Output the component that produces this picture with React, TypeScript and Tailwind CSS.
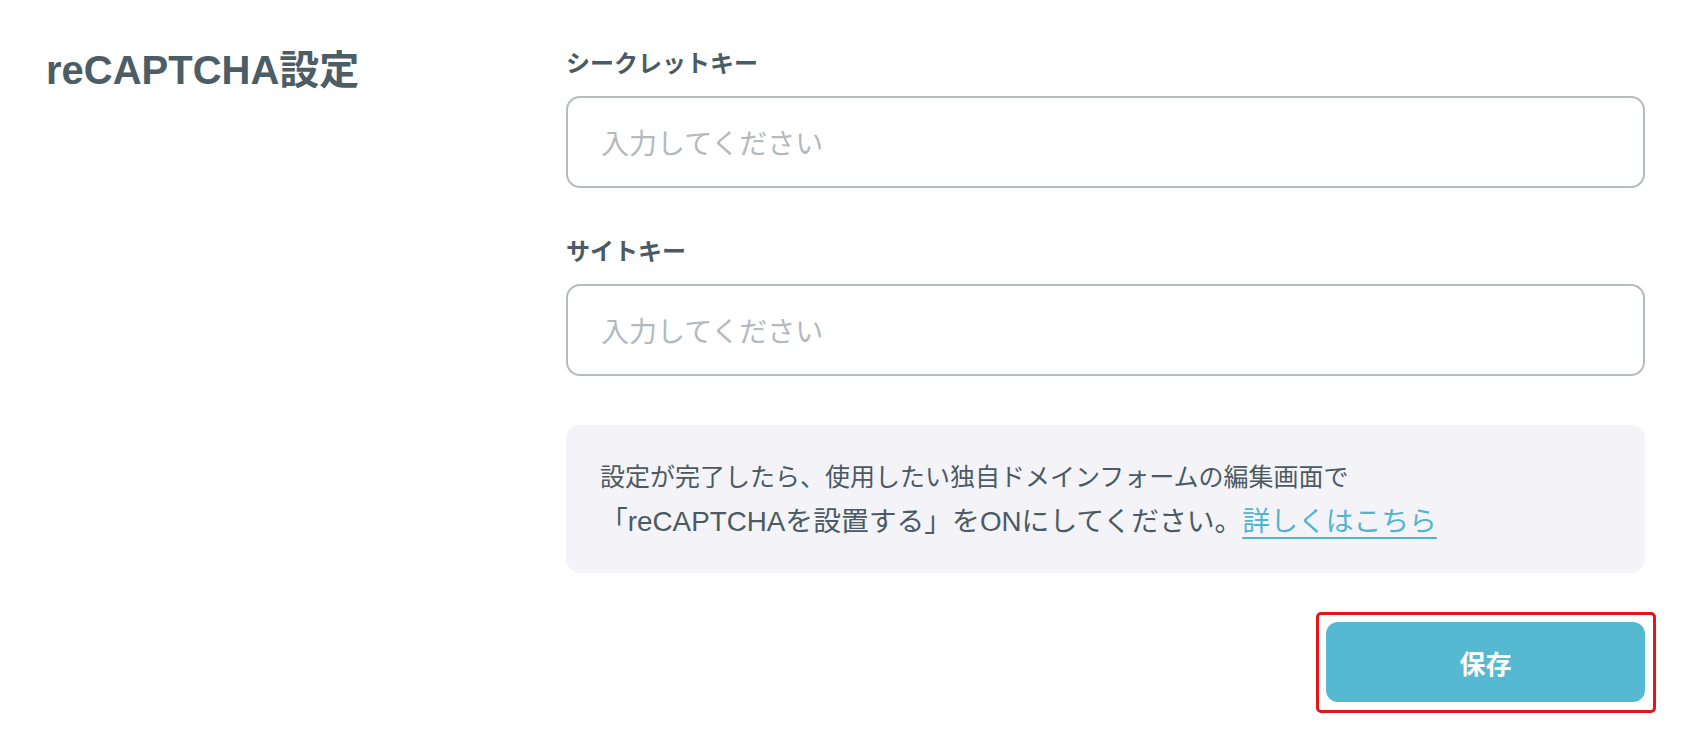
const jp = { fontFamily: '"Liberation Sans", "Noto Sans CJK JP", "Noto Sans", sans-serif' }
const jpOnly = { fontFamily: '"Noto Sans CJK JP", "Noto Sans", sans-serif' }

function Field({ label }: { label: string }) {
  return (
    <div className="flex flex-col">
      <label className="text-[24px] leading-[36px] font-bold text-[#4b5b63]" style={jpOnly}>
        {label}
      </label>
      <input
        type="text"
        placeholder="入力してください"
        className="mt-[16px] h-[92px] w-full rounded-[14px] border-2 border-[#b6bbbe] bg-white pl-[33px] text-[28px] text-[#4b5b63] placeholder:text-[#b3b9bc] outline-none"
        style={jpOnly}
      />
    </div>
  )
}

export default function App() {
  return (
    <div className="min-h-screen bg-white flex pl-[46px] pr-[59px] pt-[44px]" style={jp}>
      <div className="w-[520px] shrink-0">
        <h2 className="text-[40px] leading-[52px] font-bold text-[#4d5d65]">reCAPTCHA設定</h2>
      </div>

      <div className="flex-1 flex flex-col">
        <Field label="シークレットキー" />
        <div className="mt-[44px]">
          <Field label="サイトキー" />
        </div>

        <div className="mt-[49px] rounded-[14px] bg-[#f4f4f8] px-[34px] pt-[30px] pb-[28px] text-[#4b5a63]">
          <p className="text-[25px] leading-[44px]">設定が完了したら、使用したい独自ドメインフォームの編集画面で</p>
          <p className="text-[27.8px] leading-[46px]">
            「reCAPTCHAを設置する」をONにしてください。
            <a href="#" className="text-[#52b5d0] underline underline-offset-[6px] decoration-2">
              詳しくはこちら
            </a>
          </p>
        </div>

        <div className="mt-[49px] flex justify-end">
          <button
            className="relative w-[319px] h-[80px] rounded-[12px] bg-[#56b9d2] text-white text-[26px] font-bold"
            style={jpOnly}
          >
            保存
            <span className="pointer-events-none absolute -left-[10px] -top-[10px] -right-[11px] -bottom-[11px] rounded-[5px] border-[3px] border-[#e3161b]" />
          </button>
        </div>
      </div>
    </div>
  )
}
